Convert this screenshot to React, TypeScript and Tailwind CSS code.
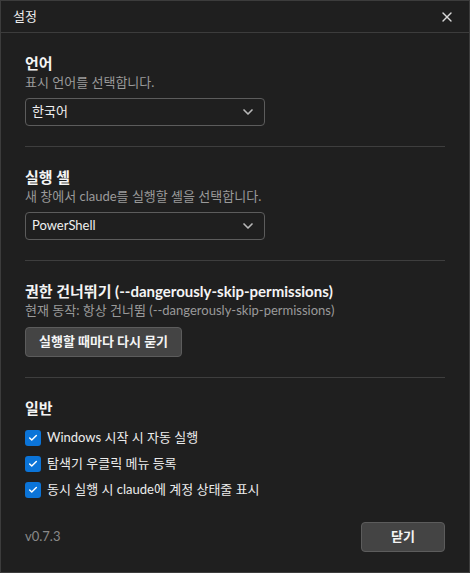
import { X, ChevronDown, Check } from "lucide-react";

const font = { fontFamily: '"Segoe UI", Lato, "Noto Sans CJK KR", sans-serif' };

const Select = ({ value }: { value: string }) => (
    <div className="mt-[7px] flex h-[28px] w-[240px] items-center justify-between rounded-[4px] border border-[#5c5c5c] bg-[#1f1f1f] pl-[6px] pr-[8px] text-[13px] text-[#f0f0f0]">
        <span>{value}</span>
        <ChevronDown size={16} strokeWidth={2.5} className="text-[#b8b8b8]" />
    </div>
);

const Section = ({ title, desc, children }: { title: string; desc: string; children: React.ReactNode }) => (
    <div className="border-b border-[#3e3e3e] pb-[20px] pt-[20px]">
        <div className="text-[15px] font-bold leading-[20px] text-[#f4f4f4]">{title}</div>
        <div className="text-[13px] leading-[18px] text-[#9a9a9a]">{desc}</div>
        {children}
    </div>
);

const CheckRow = ({ label }: { label: string }) => (
    <label className="flex h-[26px] items-center gap-[6px] text-[13px] text-[#ececec]">
        <span className="flex h-[16px] w-[16px] items-center justify-center rounded-[3px] bg-[#0b74d8]">
            <Check size={10} strokeWidth={3.5} className="text-white" />
        </span>
        {label}
    </label>
);

const App = () => {
    return (
        <div style={font} className="flex h-[573px] w-[470px] flex-col border border-[#3c3c3c] bg-[#1f1f1f]">
            <div className="flex h-[32px] shrink-0 items-center justify-between border-b border-[#3c3c3c] pl-[12px] pr-[14px]">
                <span className="text-[13px] text-[#f0f0f0]">설정</span>
                <X size={16} strokeWidth={2} className="text-[#d8d8d8]" />
            </div>

            <div className="flex flex-1 flex-col px-[24px]">
                <Section title="언어" desc="표시 언어를 선택합니다.">
                    <Select value="한국어" />
                </Section>

                <Section title="실행 셸" desc="새 창에서 claude를 실행할 셸을 선택합니다.">
                    <Select value="PowerShell" />
                </Section>

                <Section
                    title="권한 건너뛰기 (--dangerously-skip-permissions)"
                    desc="현재 동작: 항상 건너뜀 (--dangerously-skip-permissions)"
                >
                    <button className="mt-[8px] h-[30px] rounded-[4px] border border-[#5c5c5c] bg-[#444444] px-[13px] text-[13px] font-bold text-[#f4f4f4]">
                        실행할 때마다 다시 묻기
                    </button>
                </Section>

                <div className="pt-[20px]">
                    <div className="mb-[7px] text-[15px] font-bold leading-[20px] text-[#f4f4f4]">일반</div>
                    <CheckRow label="Windows 시작 시 자동 실행" />
                    <CheckRow label="탐색기 우클릭 메뉴 등록" />
                    <CheckRow label="동시 실행 시 claude에 계정 상태줄 표시" />
                </div>

                <div className="mt-auto mb-[20px] flex items-center justify-between">
                    <span className="text-[13px] text-[#8a8a8a]">v0.7.3</span>
                    <button className="h-[30px] w-[84px] rounded-[4px] border border-[#5c5c5c] bg-[#444444] text-[13px] font-bold text-[#f4f4f4]">
                        닫기
                    </button>
                </div>
            </div>
        </div>
    );
};

export default App;
